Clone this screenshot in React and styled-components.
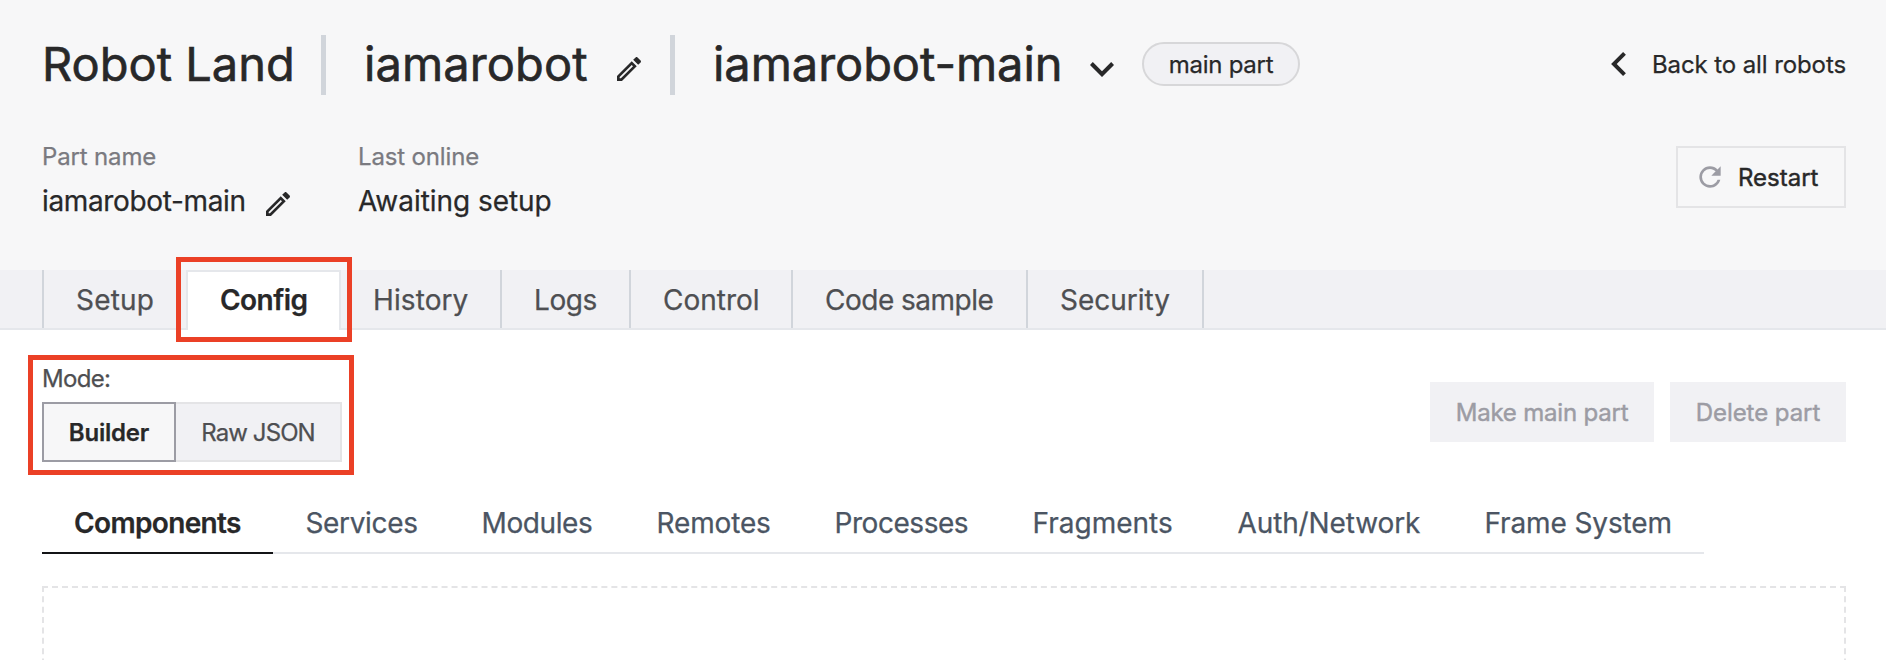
import React from "react";
import styled, { createGlobalStyle } from "styled-components";

const GlobalStyle = createGlobalStyle`
  *, *::before, *::after { box-sizing: border-box; }
  body {
    margin: 0;
    background: #fff;
    color: #282829;
    font-family: Inter, "Liberation Sans", sans-serif;
    font-size: 24px;
    font-weight: 400;
    -webkit-text-stroke: 0.25px currentColor;
    overflow: hidden;
  }
  button { font: inherit; color: inherit; margin: 0; }
`;

const Page = styled.div`
  height: 660px;
  overflow: hidden;
  white-space: nowrap;
`;

const Header = styled.header`
  height: 270px;
  padding: 35px 40px 0 42px;
  background: #f7f7f8;
`;

const TitleRow = styled.div`
  display: flex;
  align-items: center;
  height: 60px;
`;

const Title = styled.h1`
  width: ${(p) => p.$width}px;
  margin: 0 0 2px;
  font-size: 47px;
  font-weight: 400;
  -webkit-text-stroke-width: 0.6px;
  line-height: 58px;
  letter-spacing: ${(p) => p.$tracking || 0}px;
`;

const Divider = styled.span`
  width: 5px;
  height: 60px;
  margin: 0 38px 0 ${(p) => p.$before || 0}px;
  background: #d1d5db;
`;

const Pill = styled.span`
  display: flex;
  align-items: center;
  justify-content: center;
  width: 158px;
  height: 44px;
  margin: 0 0 2px 28px;
  border: 2px solid #d7d7d9;
  border-radius: 22px;
  background: #f1f1f4;
  letter-spacing: -0.25px;
`;

const BackLink = styled.a`
  display: flex;
  align-items: center;
  gap: 26px;
  margin: 0 0 2px auto;
  letter-spacing: -0.1px;
`;

const MetaRow = styled.div`
  display: flex;
  align-items: flex-start;
  margin-top: 44px;
`;

const MetaItem = styled.div`
  width: 316px;
`;

const MetaLabel = styled.div`
  padding-top: 1px;
  line-height: 34px;
  color: #7a7a80;
  letter-spacing: -0.15px;
`;

const MetaValue = styled.div`
  display: flex;
  align-items: center;
  height: 44px;
  margin-top: 5px;
  font-size: 28px;
  letter-spacing: ${(p) => p.$tracking || 0}px;
  svg { margin-top: 6px; }
`;

const MetaName = styled.span`
  width: 220px;
`;

const RestartButton = styled.button`
  display: flex;
  align-items: center;
  gap: 12px;
  width: 170px;
  height: 62px;
  margin: 7px 0 0 auto;
  padding: 0 0 0 16px;
  border: 2px solid #e4e4e6;
  background: transparent;
  -webkit-text-stroke-width: 0.45px;
  svg { color: #9c9ca4; }
`;

const TabBar = styled.nav`
  display: flex;
  height: 60px;
  padding-left: 42px;
  border-bottom: 2px solid #e5e7eb;
  background: #f1f1f4;
`;

const Tab = styled.div`
  position: relative;
  display: flex;
  align-items: center;
  width: ${(p) => p.$width}px;
  height: ${(p) => (p.$active ? 60 : 58)}px;
  padding: ${(p) => (p.$active ? "0 0 2px" : "2px 0 0")};
  padding-left: 32px;
  border-style: solid;
  border-color: ${(p) => (p.$active ? "#e5e7eb" : "#d1d5db")};
  border-width: ${(p) => p.$borders};
  background: ${(p) => (p.$active ? "#fff" : "transparent")};
  color: ${(p) => (p.$active ? "#282829" : "#4e4f52")};
  font-size: 28px;
  font-weight: ${(p) => (p.$active ? 600 : 400)};
  letter-spacing: ${(p) => p.$tracking || 0}px;
`;

const Highlight = styled.span`
  position: absolute;
  z-index: 2;
  left: ${(p) => p.$left}px;
  top: ${(p) => p.$top}px;
  width: ${(p) => p.$width}px;
  height: ${(p) => p.$height}px;
  border: 5px solid #eb4026;
  pointer-events: none;
`;

const Content = styled.main`
  padding: 30px 40px 0 42px;
`;

const Toolbar = styled.div`
  display: flex;
  align-items: flex-start;
  justify-content: space-between;
`;

const ModeGroup = styled.div`
  position: relative;
`;

const ModeLabel = styled.div`
  padding-top: 1px;
  line-height: 36px;
  color: #4e4f52;
  letter-spacing: -0.7px;
`;

const ModeSwitch = styled.div`
  display: flex;
  margin-top: 5px;
`;

const ModeButton = styled.button`
  width: ${(p) => p.$width}px;
  height: 60px;
  padding: 0;
  border: 2px solid ${(p) => (p.$active ? "#9c9ca4" : "#e4e4e6")};
  border-left-width: ${(p) => (p.$active ? 2 : 0)}px;
  background: ${(p) => (p.$active ? "#f7f7f8" : "#f1f1f4")};
  color: ${(p) => (p.$active ? "#282829" : "#4e4f52")};
  font-weight: ${(p) => (p.$active ? 600 : 400)};
  letter-spacing: ${(p) => p.$tracking}px;
`;

const Actions = styled.div`
  display: flex;
  gap: 16px;
  margin-top: 22px;
`;

const ActionButton = styled.button`
  width: ${(p) => p.$width}px;
  height: 60px;
  padding: 0;
  border: 0;
  background: #f1f1f4;
  color: #9c9ca4;
  -webkit-text-stroke-width: 0.45px;
  letter-spacing: ${(p) => p.$tracking}px;
`;

const SubTabs = styled.nav`
  display: flex;
  width: 1662px;
  margin-top: 32px;
`;

const SubTab = styled.div`
  width: ${(p) => p.$width}px;
  height: 60px;
  padding-left: ${(p) => (p.$active ? 32 : 32.5)}px;
  border-bottom: 2px solid ${(p) => (p.$active ? "#131416" : "#e5e7eb")};
  color: ${(p) => (p.$active ? "#282829" : "#4b5563")};
  font-size: 28px;
  font-weight: ${(p) => (p.$active ? 600 : 400)};
  line-height: 58px;
  letter-spacing: ${(p) => p.$tracking || 0}px;
`;

const DropArea = styled.section`
  height: 120px;
  margin-top: 32px;
  border: 2px dashed #e4e4e6;
`;

const PencilIcon = () => (
  <svg width="32" height="32" viewBox="0 0 24 24" fill="currentColor">
    <path d="M14.06,9L15,9.94L5.92,19H5V18.08L14.06,9M17.66,3C17.41,3 17.15,3.1 16.96,3.29L15.13,5.12L18.88,8.87L20.71,7.04C21.1,6.65 21.1,6 20.71,5.63L18.37,3.29C18.17,3.09 17.92,3 17.66,3M14.06,6.19L3,17.25V21H6.75L17.81,9.94L14.06,6.19Z" />
  </svg>
);

const TitlePencil = styled.span`
  display: flex;
  margin-top: 8px;
`;

const ChevronDown = styled.svg`
  margin-top: 9px;
`;

const RefreshIcon = () => (
  <svg width="32" height="32" viewBox="0 0 24 24" fill="currentColor">
    <path d="M17.65,6.35C16.2,4.9 14.21,4 12,4A8,8 0 0,0 4,12A8,8 0 0,0 12,20C15.73,20 18.84,17.45 19.73,14H17.65C16.83,16.33 14.61,18 12,18A6,6 0 0,1 6,12A6,6 0 0,1 12,6C13.66,6 15.14,6.69 16.22,7.78L13,11H20V4L17.65,6.35Z" />
  </svg>
);

const tabs = [
  { label: "Setup", width: 144, borders: "0 0 0 2px", tracking: 0.2 },
  { label: "Config", width: 155, borders: "2px 2px 0 2px", tracking: -0.55, active: true },
  { label: "History", width: 161, borders: "0 2px 0 0", tracking: 0.1 },
  { label: "Logs", width: 129, borders: "0 2px 0 0", tracking: -0.4 },
  { label: "Control", width: 162, borders: "0 2px 0 0" },
  { label: "Code sample", width: 235, borders: "0 2px 0 0", tracking: -0.5 },
  { label: "Security", width: 176, borders: "0 2px 0 0" },
];

const subTabs = [
  { label: "Components", width: 231, tracking: -0.65, active: true },
  { label: "Services", width: 176, tracking: -0.35 },
  { label: "Modules", width: 175, tracking: -0.4 },
  { label: "Remotes", width: 178, tracking: -0.15 },
  { label: "Processes", width: 198, tracking: -0.45 },
  { label: "Fragments", width: 205 },
  { label: "Auth/Network", width: 247, tracking: -0.12 },
  { label: "Frame System", width: 252, tracking: -0.12 },
];

export default function App() {
  return (
    <Page>
      <GlobalStyle />
      <Header>
        <TitleRow>
          <Title $width={279}>Robot Land</Title>
          <Divider />
          <Title $width={249} $tracking={0.1}>iamarobot</Title>
          <TitlePencil><PencilIcon /></TitlePencil>
          <Divider $before={25} />
          <Title $width={377} $tracking={-0.05}>iamarobot-main</Title>
          <ChevronDown width="24" height="15" viewBox="6 8.58 12 7.42" fill="currentColor">
            <path d="M7.41,8.58L12,13.17L16.59,8.58L18,10L12,16L6,10L7.41,8.58Z" />
          </ChevronDown>
          <Pill>main part</Pill>
          <BackLink>
            <svg width="15" height="24" viewBox="8 6 7.42 12" fill="currentColor">
              <path d="M15.41,16.58L10.83,12L15.41,7.41L14,6L8,12L14,18L15.41,16.58Z" />
            </svg>
            Back to all robots
          </BackLink>
        </TitleRow>
        <MetaRow>
          <MetaItem>
            <MetaLabel>Part name</MetaLabel>
            <MetaValue $tracking={-0.35}>
              <MetaName>iamarobot-main</MetaName>
              <PencilIcon />
            </MetaValue>
          </MetaItem>
          <MetaItem>
            <MetaLabel>Last online</MetaLabel>
            <MetaValue $tracking={-0.05}>Awaiting setup</MetaValue>
          </MetaItem>
          <RestartButton>
            <RefreshIcon />
            Restart
          </RestartButton>
        </MetaRow>
      </Header>
      <TabBar>
        {tabs.map((t) => (
          <Tab key={t.label} $width={t.width} $borders={t.borders} $tracking={t.tracking} $active={t.active}>
            {t.label}
            {t.active && <Highlight $left={-12} $top={-15} $width={176} $height={85} />}
          </Tab>
        ))}
      </TabBar>
      <Content>
        <Toolbar>
          <ModeGroup>
            <ModeLabel>Mode:</ModeLabel>
            <ModeSwitch>
              <ModeButton $width={134} $tracking={-0.2} $active>Builder</ModeButton>
              <ModeButton $width={166} $tracking={-0.9}>Raw JSON</ModeButton>
            </ModeSwitch>
            <Highlight $left={-14} $top={-5} $width={326} $height={120} />
          </ModeGroup>
          <Actions>
            <ActionButton $width={224} $tracking={-0.2}>Make main part</ActionButton>
            <ActionButton $width={176} $tracking={-0.05}>Delete part</ActionButton>
          </Actions>
        </Toolbar>
        <SubTabs>
          {subTabs.map((t) => (
            <SubTab key={t.label} $width={t.width} $tracking={t.tracking} $active={t.active}>{t.label}</SubTab>
          ))}
        </SubTabs>
        <DropArea />
      </Content>
    </Page>
  );
}
